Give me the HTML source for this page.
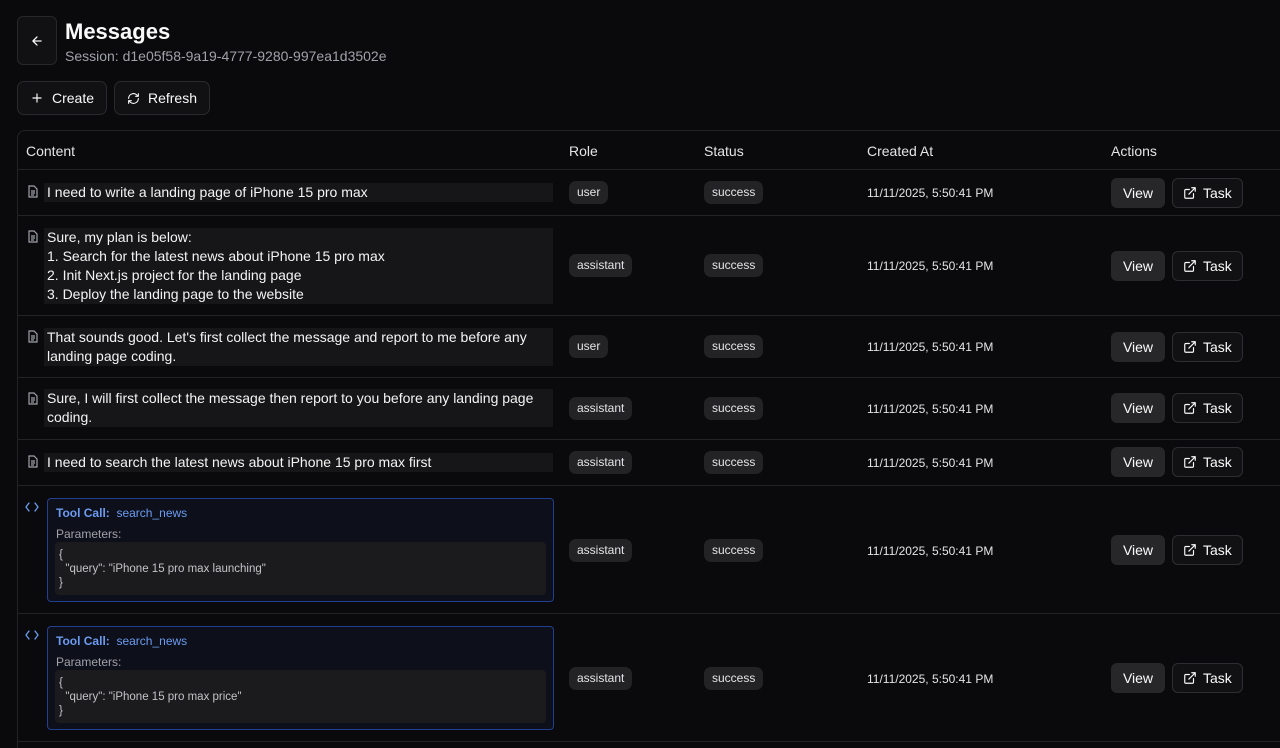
<!DOCTYPE html>
<html><head><meta charset="utf-8"><style>
*{box-sizing:border-box;margin:0;padding:0}
html,body{width:1280px;height:748px;overflow:hidden}
body{background:#0a0a0c;color:#fafafa;font-family:"Liberation Sans",sans-serif;position:relative}
.abs{position:absolute}
.back{left:17px;top:16px;width:40px;height:49px;border:1px solid #27272a;border-radius:6px;background:#111113;display:flex;align-items:center;justify-content:center}
h1{position:absolute;left:65px;top:19px;font-size:22px;font-weight:700}
.sess{left:65px;top:48px;font-size:14px;color:#a1a1aa}
.btn{top:81px;height:34px;border:1px solid #2a2a2e;border-radius:7px;background:#111113;display:flex;align-items:center;font-size:14px;gap:8px;padding:0 12px}
.table{left:17px;top:130px;width:1290px;height:618px;border:1px solid #232326;border-bottom:none;border-radius:8px 0 0 0}
.hdr{top:143px;font-size:14px;color:#e4e4e7}
.line{left:18px;width:1262px;height:1px;background:#232326}
.txt{position:absolute;left:44px;width:509px;background:#161618;font-size:14px;line-height:19px;padding:0 3px;color:#f4f4f5}
.doc{position:absolute;left:27px}
.badge{position:absolute;height:23px;line-height:23px;padding:0 8px;border-radius:7px;background:#232326;font-size:12px;color:#e4e4e7}
.date{position:absolute;left:867px;font-size:12px;color:#e4e4e7}
.view{position:absolute;left:1111px;width:54px;height:30px;border-radius:6px;background:#27272a;font-size:14px;text-align:center;line-height:30px}
.task{position:absolute;left:1172px;width:71px;height:30px;border-radius:6px;border:1px solid #2e2e32;background:#111113;font-size:14px;display:flex;align-items:center;gap:6px;padding-left:10px}
.tool{position:absolute;left:47px;width:507px;height:104px;border:1px solid #23408e;border-radius:4px;background:#0d0f1a}
.tool .t{position:absolute;left:8px;top:7px;font-size:12px;color:#6b9cf0}
.tool .p{position:absolute;left:8px;top:28px;font-size:12px;color:#a1a1aa}
.tool .c{position:absolute;left:7px;top:43px;width:491px;height:53px;background:#1b1b1e;border-radius:4px;font-size:11.5px;line-height:14px;color:#c4c4c8;padding:6px 4px}
.code{position:absolute;left:25px}
</style></head><body>
<div class="abs back"><svg width="14" height="14" viewBox="0 0 24 24" fill="none" stroke="#fafafa" stroke-width="2.2" stroke-linecap="round" stroke-linejoin="round"><path d="M19 12H5M12 19l-7-7 7-7"/></svg></div>
<h1>Messages</h1>
<div class="abs sess">Session: d1e05f58-9a19-4777-9280-997ea1d3502e</div>
<div class="abs btn" style="left:17px;width:90px"><svg width="14" height="14" viewBox="0 0 24 24" fill="none" stroke="#fafafa" stroke-width="2" stroke-linecap="round"><path d="M12 5v14M5 12h14"/></svg>Create</div>
<div class="abs btn" style="left:114px;width:96px"><svg width="15" height="15" viewBox="0 0 24 24" fill="none" stroke="#fafafa" stroke-width="2" stroke-linecap="round" stroke-linejoin="round"><path d="M3 12a9 9 0 0 1 15-6.7L21 8M21 3v5h-5M21 12a9 9 0 0 1-15 6.7L3 16M8 16H3v5"/></svg>Refresh</div>
<div class="abs table"></div>
<div class="abs hdr" style="left:26px">Content</div>
<div class="abs hdr" style="left:569px">Role</div>
<div class="abs hdr" style="left:704px">Status</div>
<div class="abs hdr" style="left:867px">Created At</div>
<div class="abs hdr" style="left:1111px">Actions</div>
<div class="abs line" style="top:169px"></div>
<div class="abs line" style="top:215px"></div>
<div class="abs line" style="top:315px"></div>
<div class="abs line" style="top:377px"></div>
<div class="abs line" style="top:439px"></div>
<div class="abs line" style="top:485px"></div>
<div class="abs line" style="top:613px"></div>
<div class="abs line" style="top:741px"></div>

<svg class="doc" style="top:185px" width="12" height="13" viewBox="0 0 12 13" fill="none" stroke="#a1a1aa" stroke-width="1.2"><path d="M2 1h5l3 3v8H2z M4 6h4M4 8h4M4 10h3"/></svg>
<div class="txt" style="top:183px">I need to write a landing page of iPhone 15 pro max</div>
<div class="badge" style="left:569px;top:181px">user</div><div class="badge" style="left:704px;top:181px">success</div>
<div class="date" style="top:186px">11/11/2025, 5:50:41 PM</div>
<div class="view" style="top:178px">View</div><div class="task" style="top:178px"><svg width="14" height="14" viewBox="0 0 24 24" fill="none" stroke="#fafafa" stroke-width="2" stroke-linecap="round" stroke-linejoin="round"><path d="M15 3h6v6M10 14L21 3M18 13v6a2 2 0 0 1-2 2H5a2 2 0 0 1-2-2V8a2 2 0 0 1 2-2h6"/></svg>Task</div>

<svg class="doc" style="top:230px" width="12" height="13" viewBox="0 0 12 13" fill="none" stroke="#a1a1aa" stroke-width="1.2"><path d="M2 1h5l3 3v8H2z M4 6h4M4 8h4M4 10h3"/></svg>
<div class="txt" style="top:228px;height:76px">Sure, my plan is below:<br>1. Search for the latest news about iPhone 15 pro max<br>2. Init Next.js project for the landing page<br>3. Deploy the landing page to the website</div>
<div class="badge" style="left:569px;top:254px">assistant</div><div class="badge" style="left:704px;top:254px">success</div>
<div class="date" style="top:259px">11/11/2025, 5:50:41 PM</div>
<div class="view" style="top:251px">View</div><div class="task" style="top:251px"><svg width="14" height="14" viewBox="0 0 24 24" fill="none" stroke="#fafafa" stroke-width="2" stroke-linecap="round" stroke-linejoin="round"><path d="M15 3h6v6M10 14L21 3M18 13v6a2 2 0 0 1-2 2H5a2 2 0 0 1-2-2V8a2 2 0 0 1 2-2h6"/></svg>Task</div>

<svg class="doc" style="top:330px" width="12" height="13" viewBox="0 0 12 13" fill="none" stroke="#a1a1aa" stroke-width="1.2"><path d="M2 1h5l3 3v8H2z M4 6h4M4 8h4M4 10h3"/></svg>
<div class="txt" style="top:328px;height:38px">That sounds good. Let's first collect the message and report to me before any landing page coding.</div>
<div class="badge" style="left:569px;top:335px">user</div><div class="badge" style="left:704px;top:335px">success</div>
<div class="date" style="top:340px">11/11/2025, 5:50:41 PM</div>
<div class="view" style="top:332px">View</div><div class="task" style="top:332px"><svg width="14" height="14" viewBox="0 0 24 24" fill="none" stroke="#fafafa" stroke-width="2" stroke-linecap="round" stroke-linejoin="round"><path d="M15 3h6v6M10 14L21 3M18 13v6a2 2 0 0 1-2 2H5a2 2 0 0 1-2-2V8a2 2 0 0 1 2-2h6"/></svg>Task</div>

<svg class="doc" style="top:392px" width="12" height="13" viewBox="0 0 12 13" fill="none" stroke="#a1a1aa" stroke-width="1.2"><path d="M2 1h5l3 3v8H2z M4 6h4M4 8h4M4 10h3"/></svg>
<div class="txt" style="top:389px;height:38px">Sure, I will first collect the message then report to you before any landing page coding.</div>
<div class="badge" style="left:569px;top:397px">assistant</div><div class="badge" style="left:704px;top:397px">success</div>
<div class="date" style="top:402px">11/11/2025, 5:50:41 PM</div>
<div class="view" style="top:393px">View</div><div class="task" style="top:393px"><svg width="14" height="14" viewBox="0 0 24 24" fill="none" stroke="#fafafa" stroke-width="2" stroke-linecap="round" stroke-linejoin="round"><path d="M15 3h6v6M10 14L21 3M18 13v6a2 2 0 0 1-2 2H5a2 2 0 0 1-2-2V8a2 2 0 0 1 2-2h6"/></svg>Task</div>

<svg class="doc" style="top:455px" width="12" height="13" viewBox="0 0 12 13" fill="none" stroke="#a1a1aa" stroke-width="1.2"><path d="M2 1h5l3 3v8H2z M4 6h4M4 8h4M4 10h3"/></svg>
<div class="txt" style="top:453px">I need to search the latest news about iPhone 15 pro max first</div>
<div class="badge" style="left:569px;top:451px">assistant</div><div class="badge" style="left:704px;top:451px">success</div>
<div class="date" style="top:456px">11/11/2025, 5:50:41 PM</div>
<div class="view" style="top:447px">View</div><div class="task" style="top:447px"><svg width="14" height="14" viewBox="0 0 24 24" fill="none" stroke="#fafafa" stroke-width="2" stroke-linecap="round" stroke-linejoin="round"><path d="M15 3h6v6M10 14L21 3M18 13v6a2 2 0 0 1-2 2H5a2 2 0 0 1-2-2V8a2 2 0 0 1 2-2h6"/></svg>Task</div>

<svg class="code" style="top:502px" width="14" height="10" viewBox="0 0 14 10" fill="none" stroke="#6b9cf0" stroke-width="1.3" stroke-linecap="round" stroke-linejoin="round"><path d="M4 1L1 5l3 4M10 1l3 4-3 4"/></svg>
<div class="tool" style="top:498px"><div class="t"><b>Tool Call:</b>&nbsp; search_news</div><div class="p">Parameters:</div><div class="c">{<br>&nbsp; "query": "iPhone 15 pro max launching"<br>}</div></div>
<div class="badge" style="left:569px;top:539px">assistant</div><div class="badge" style="left:704px;top:539px">success</div>
<div class="date" style="top:544px">11/11/2025, 5:50:41 PM</div>
<div class="view" style="top:535px">View</div><div class="task" style="top:535px"><svg width="14" height="14" viewBox="0 0 24 24" fill="none" stroke="#fafafa" stroke-width="2" stroke-linecap="round" stroke-linejoin="round"><path d="M15 3h6v6M10 14L21 3M18 13v6a2 2 0 0 1-2 2H5a2 2 0 0 1-2-2V8a2 2 0 0 1 2-2h6"/></svg>Task</div>

<svg class="code" style="top:630px" width="14" height="10" viewBox="0 0 14 10" fill="none" stroke="#6b9cf0" stroke-width="1.3" stroke-linecap="round" stroke-linejoin="round"><path d="M4 1L1 5l3 4M10 1l3 4-3 4"/></svg>
<div class="tool" style="top:626px"><div class="t"><b>Tool Call:</b>&nbsp; search_news</div><div class="p">Parameters:</div><div class="c">{<br>&nbsp; "query": "iPhone 15 pro max price"<br>}</div></div>
<div class="badge" style="left:569px;top:667px">assistant</div><div class="badge" style="left:704px;top:667px">success</div>
<div class="date" style="top:672px">11/11/2025, 5:50:41 PM</div>
<div class="view" style="top:663px">View</div><div class="task" style="top:663px"><svg width="14" height="14" viewBox="0 0 24 24" fill="none" stroke="#fafafa" stroke-width="2" stroke-linecap="round" stroke-linejoin="round"><path d="M15 3h6v6M10 14L21 3M18 13v6a2 2 0 0 1-2 2H5a2 2 0 0 1-2-2V8a2 2 0 0 1 2-2h6"/></svg>Task</div>
</body></html>
